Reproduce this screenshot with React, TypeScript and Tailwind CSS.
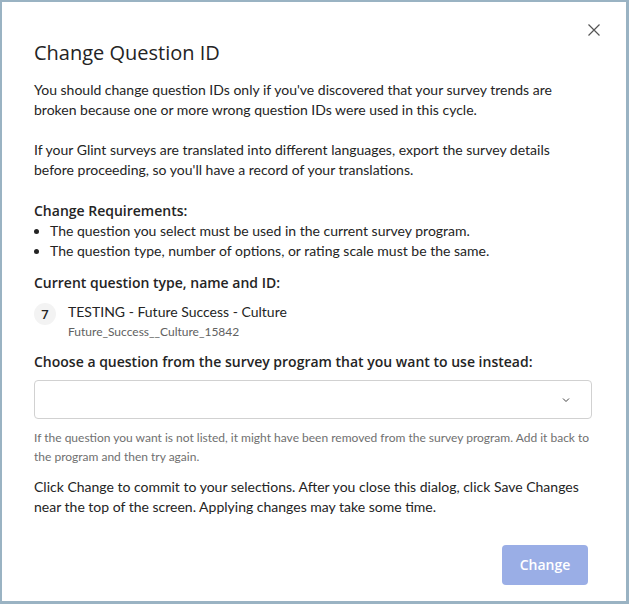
const label = { fontFamily: '"Open Sans", sans-serif' };

export default function App() {
  return (
    <div className="w-[629px] h-[604px] bg-[#9ab3c3] pl-[2px] pt-[2px] pr-[3px] pb-[3px]" style={{ fontFamily: 'Lato, "Noto Sans", sans-serif' }}>
      <div className="relative h-full w-full bg-white pl-8 pr-[34px] pt-[37px] text-[14px] leading-5 text-[#242424]">
        <button className="absolute right-[24px] top-[20px] text-[#555]" aria-label="Close">
          <svg width="16" height="16" viewBox="0 0 16 16" fill="none" stroke="currentColor" strokeWidth="1.2">
            <path d="M2.5 2.5l11 11M13.5 2.5l-11 11" />
          </svg>
        </button>
        <h1 className="text-[20px] leading-7 text-[#242424]" style={label}>Change Question ID</h1>
        <p className="mt-[13px]">
          You should change question IDs only if you've discovered that your survey trends are broken because one or more wrong question IDs were used in this cycle.
        </p>
        <p className="mt-5">
          If your Glint surveys are translated into different languages, export the survey details before proceeding, so you'll have a record of your translations.
        </p>
        <div className="mt-[21px] font-semibold" style={label}>Change Requirements:</div>
        <ul className="list-disc pl-4">
          <li>The question you select must be used in the current survey program.</li>
          <li>The question type, number of options, or rating scale must be the same.</li>
        </ul>
        <div className="mt-3 font-semibold" style={label}>Current question type, name and ID:</div>
        <div className="mt-[9px] flex items-start gap-3">
          <div className="mt-[1px] flex h-[22px] w-[22px] items-center justify-center rounded-full bg-[#f3f3f3] text-[13px] font-semibold" style={label}>7</div>
          <div>
            <div>TESTING - Future Success - Culture</div>
            <div className="mt-[1px] text-[12px] leading-[18px] text-[#616161]">Future_Success__Culture_15842</div>
          </div>
        </div>
        <div className="mt-[11px] font-semibold" style={label}>Choose a question from the survey program that you want to use instead:</div>
        <div className="mt-[8px] flex h-[39px] items-center justify-end rounded border border-[#d1d1d1] pr-5">
          <svg width="10" height="10" viewBox="0 0 10 10" fill="none" stroke="#424242" strokeWidth="1">
            <path d="M2 3.5l3 3 3-3" />
          </svg>
        </div>
        <p className="mt-[9px] text-[12px] leading-[19px] text-[#707070]">
          If the question you want is not listed, it might have been removed from the survey program. Add it back to the program and then try again.
        </p>
        <p className="mt-[11px]">
          Click Change to commit to your selections. After you close this dialog, click Save Changes near the top of the screen. Applying changes may take some time.
        </p>
        <div className="mt-[28px] flex justify-end">
          <button className="mr-[4px] h-[40px] w-[86px] rounded bg-[#9aaee6] text-[14px] font-semibold text-white" style={label}>Change</button>
        </div>
      </div>
    </div>
  );
}
